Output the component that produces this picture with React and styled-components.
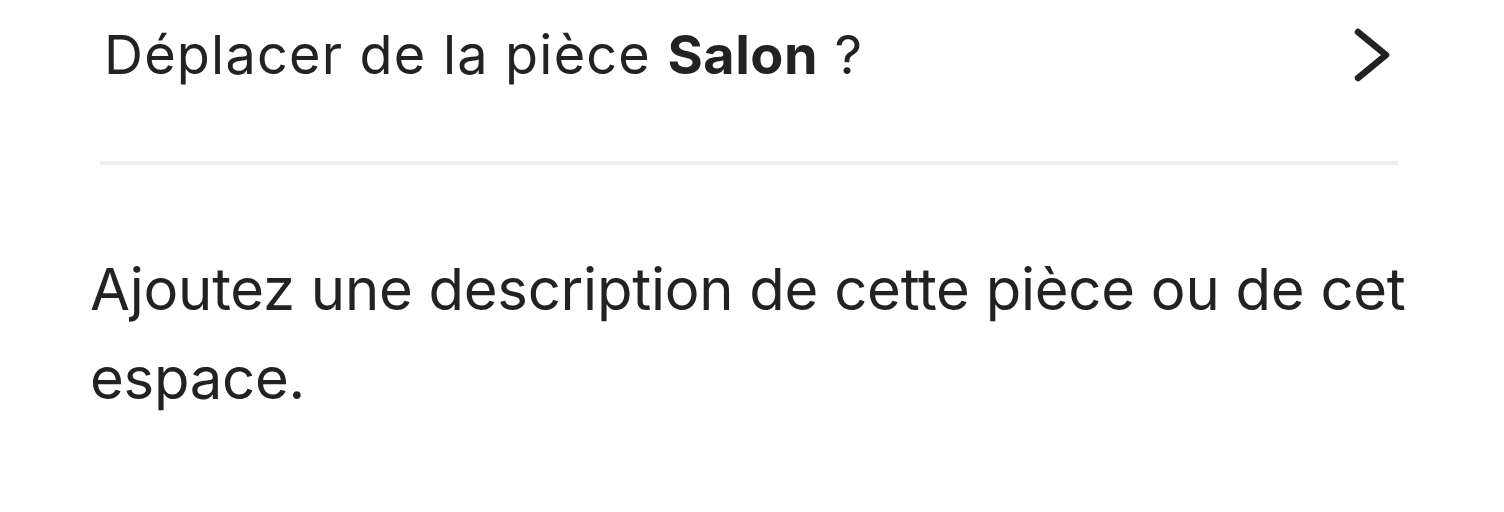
import React from "react";
import styled, { createGlobalStyle } from "styled-components";

const Global = createGlobalStyle`
  html, body { margin: 0; padding: 0; background: #fff; }
  body { font-family: Inter, "Noto Sans", sans-serif; color: #222; }
`;

const Page = styled.div`
  width: 1504px;
  height: 512px;
  overflow: hidden;
  display: flex;
  flex-direction: column;
`;

const Row = styled.div`
  display: flex;
  align-items: center;
  justify-content: space-between;
  height: 110px;
  padding: 0 112px 0 104px;
`;

const RowLabel = styled.span`
  font-size: 54px;
  line-height: 1.21;
  font-weight: 400;
  letter-spacing: 1.2px;
  strong { font-weight: 700; letter-spacing: 0.5px; }
`;

const Divider = styled.hr`
  margin: 51px 106px 0 100px;
  border: none;
  height: 4px;
  background: #ededed;
`;

const Description = styled.p`
  margin: 80px 0 0 0;
  padding: 0 92px 0 90px;
  font-size: 58px;
  line-height: 89px;
  letter-spacing: -0.25px;
`;

const Chevron = () => (
  <svg width="40" height="56" viewBox="0 0 40 56" fill="none">
    <path d="M6 5 L34 28 L6 51" stroke="#222" strokeWidth="6.5" strokeLinecap="round" strokeLinejoin="round" />
  </svg>
);

export default function App() {
  return (
    <Page>
      <Global />
      <Row>
        <RowLabel>Déplacer de la pièce <strong>Salon</strong> ?</RowLabel>
        <Chevron />
      </Row>
      <Divider />
      <Description>
        Ajoutez une description de cette pièce ou de cet espace.
      </Description>
    </Page>
  );
}
